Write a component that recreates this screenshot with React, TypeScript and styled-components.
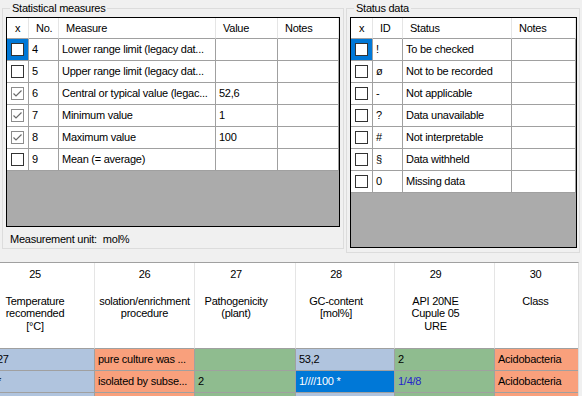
import styled, { createGlobalStyle } from 'styled-components';

const GlobalStyle = createGlobalStyle`
  html, body {
    margin: 0;
    padding: 0;
    background: #f0f0f0;
  }
  body {
    font-family: "Liberation Sans", Arial, sans-serif;
    font-size: 11px;
    letter-spacing: -0.25px;
    color: #000;
  }
`;

const Window = styled.div`
  width: 582px;
  height: 396px;
  overflow: hidden;
  background: #f0f0f0;
  display: flex;
  flex-direction: column;
`;

const TopArea = styled.div`
  height: 262px;
  flex: none;
  box-sizing: border-box;
  display: flex;
  align-items: flex-start;
  gap: 2px;
  padding: 1px 0 0 2px;
`;

const GroupBox = styled.fieldset<{ $w: number; $h: number }>`
  width: ${(p) => p.$w}px;
  height: ${(p) => p.$h}px;
  box-sizing: border-box;
  min-width: 0;
  margin: 0;
  padding: 2px 3px 0 3px;
  border: 1px solid #dcdcdc;
  display: flex;
  flex-direction: column;
`;

const Legend = styled.legend`
  margin-left: 4px;
  padding: 0 2px;
  line-height: 14px;
`;

const TableFrame = styled.div<{ $w: number; $h: number }>`
  width: ${(p) => p.$w}px;
  height: ${(p) => p.$h}px;
  flex: none;
  box-sizing: border-box;
  border: 1px solid #000;
  background: #ababab;
  overflow: hidden;
`;

const Row = styled.div`
  display: flex;
`;

const HeadCell = styled.div<{ $w: number; $center?: boolean }>`
  width: ${(p) => p.$w}px;
  height: 21px;
  box-sizing: border-box;
  background: #fff;
  border-right: 1px solid #e5e5e5;
  border-bottom: 1px solid #a0a0a0;
  padding-left: ${(p) => (p.$center ? 0 : 7)}px;
  display: flex;
  align-items: center;
  justify-content: ${(p) => (p.$center ? 'center' : 'flex-start')};
  white-space: nowrap;
`;

const Cell = styled.div<{ $w: number }>`
  width: ${(p) => p.$w}px;
  height: 22px;
  box-sizing: border-box;
  background: #fff;
  border-right: 1px solid #a0a0a0;
  border-bottom: 1px solid #a0a0a0;
  padding-left: 3px;
  line-height: 21px;
  white-space: nowrap;
  overflow: hidden;
`;

const CheckCell = styled(Cell)<{ $selected?: boolean }>`
  padding-left: 0;
  background: ${(p) => (p.$selected ? '#0078d7' : '#fff')};
  display: flex;
  align-items: center;
  justify-content: center;
`;

const Box = styled.span<{ $checked?: boolean }>`
  width: 13px;
  height: 13px;
  box-sizing: border-box;
  background: #fff;
  border: 1px solid ${(p) => (p.$checked ? '#8c8c8c' : '#333')};
  display: flex;
  align-items: center;
  justify-content: center;
`;

const Caption = styled.div`
  margin-top: 5px;
  padding-left: 4px;
  line-height: 14px;
  display: flex;
  gap: 6px;
`;

const DataGrid = styled.div`
  width: 579px;
  flex: 1;
  box-sizing: border-box;
  background: #fff;
  border-top: 1px solid #a0a0a0;
  border-right: 1px solid #dcdcdc;
  overflow: hidden;
`;

const GridInner = styled.div`
  margin-left: -6px;
  width: max-content;
`;

const ColHead = styled.div<{ $w: number; $tight?: boolean }>`
  width: ${(p) => p.$w}px;
  height: 86px;
  box-sizing: border-box;
  border-right: 1px solid #e5e5e5;
  border-bottom: 1px solid #a0a0a0;
  padding: 5px ${(p) => (p.$tight ? 0 : 18)}px 0 0;
  display: flex;
  flex-direction: column;
  align-items: center;
  overflow: hidden;
`;

const ColNo = styled.div`
  line-height: 13px;
`;

const ColLabel = styled.div`
  margin-top: 14px;
  line-height: 12.3px;
  white-space: pre;
  text-align: center;
`;

const DataCell = styled.div<{ $w: number; $bg: string; $fg?: string }>`
  width: ${(p) => p.$w}px;
  height: 22px;
  box-sizing: border-box;
  background: ${(p) => p.$bg};
  color: ${(p) => p.$fg ?? '#000'};
  border-right: 1px solid #a0a0a0;
  border-bottom: 1px solid #a0a0a0;
  padding-left: 3px;
  line-height: 21px;
  white-space: nowrap;
  overflow: hidden;
`;

function Check({ checked }: { checked?: boolean }) {
  return (
    <Box $checked={checked}>
      {checked && (
        <svg width="11" height="11" viewBox="0 0 11 11">
          <polyline points="1.5,5.5 4,8 9.5,2.5" fill="none" stroke="#6a6a6a" strokeWidth="1.2" />
        </svg>
      )}
    </Box>
  );
}

const measures = [
  { no: '4', name: 'Lower range limit (legacy dat...', value: '', checked: false },
  { no: '5', name: 'Upper range limit (legacy dat...', value: '', checked: false },
  { no: '6', name: 'Central or typical value (legac...', value: '52,6', checked: true },
  { no: '7', name: 'Minimum value', value: '1', checked: true },
  { no: '8', name: 'Maximum value', value: '100', checked: true },
  { no: '9', name: 'Mean (= average)', value: '', checked: false },
];

const statuses = [
  { id: '!', name: 'To be checked' },
  { id: 'ø', name: 'Not to be recorded' },
  { id: '-', name: 'Not applicable' },
  { id: '?', name: 'Data unavailable' },
  { id: '#', name: 'Not interpretable' },
  { id: '§', name: 'Data withheld' },
  { id: '0', name: 'Missing data' },
];

const BLUE = '#b0c4de';
const ORANGE = '#f9a07c';
const GREEN = '#8fbc8f';
const SELECTED = '#0078d7';

const columns = [
  { no: '25', label: 'Temperature\nrecomended\n[°C]', w: 101 },
  { no: '26', label: 'solation/enrichment\nprocedure', w: 100, tight: true },
  { no: '27', label: 'Pathogenicity\n(plant)', w: 101 },
  { no: '28', label: 'GC-content\n[mol%]', w: 99 },
  { no: '29', label: 'API 20NE\nCupule 05\nURE', w: 100 },
  { no: '30', label: 'Class', w: 100 },
];

type GridCell = { text: string; bg: string; fg?: string };

const rows: GridCell[][] = [
  [
    { text: '27', bg: BLUE },
    { text: 'pure culture was ...', bg: ORANGE },
    { text: '', bg: GREEN },
    { text: '53,2', bg: BLUE },
    { text: '2', bg: GREEN },
    { text: 'Acidobacteria', bg: ORANGE },
  ],
  [
    { text: '*', bg: BLUE },
    { text: 'isolated by subse...', bg: ORANGE },
    { text: '2', bg: GREEN },
    { text: '1////100 *', bg: SELECTED, fg: '#fff' },
    { text: '1/4/8', bg: GREEN, fg: '#2424cc' },
    { text: 'Acidobacteria', bg: ORANGE },
  ],
  [
    { text: '', bg: BLUE },
    { text: '', bg: ORANGE },
    { text: '', bg: GREEN },
    { text: '', bg: BLUE },
    { text: '', bg: GREEN },
    { text: '', bg: ORANGE },
  ],
];

export default function App() {
  return (
    <Window>
      <GlobalStyle />
      <TopArea>
        <GroupBox $w={342} $h={248}>
          <Legend>Statistical measures</Legend>
          <TableFrame $w={334} $h={210}>
            <Row>
              <HeadCell $w={22} $center>x</HeadCell>
              <HeadCell $w={30}>No.</HeadCell>
              <HeadCell $w={157}>Measure</HeadCell>
              <HeadCell $w={62}>Value</HeadCell>
              <HeadCell $w={61}>Notes</HeadCell>
            </Row>
            {measures.map((m, i) => (
              <Row key={m.no}>
                <CheckCell $w={22} $selected={i === 0}>
                  <Check checked={m.checked} />
                </CheckCell>
                <Cell $w={30}>{m.no}</Cell>
                <Cell $w={157}>{m.name}</Cell>
                <Cell $w={62}>{m.value}</Cell>
                <Cell $w={61} />
              </Row>
            ))}
          </TableFrame>
          <Caption>
            <span>Measurement unit:</span>
            <span>mol%</span>
          </Caption>
        </GroupBox>
        <GroupBox $w={234} $h={252}>
          <Legend>Status data</Legend>
          <TableFrame $w={227} $h={231}>
            <Row>
              <HeadCell $w={22} $center>x</HeadCell>
              <HeadCell $w={30}>ID</HeadCell>
              <HeadCell $w={109}>Status</HeadCell>
              <HeadCell $w={64}>Notes</HeadCell>
            </Row>
            {statuses.map((s, i) => (
              <Row key={s.name}>
                <CheckCell $w={22} $selected={i === 0}>
                  <Check />
                </CheckCell>
                <Cell $w={30}>{s.id}</Cell>
                <Cell $w={109}>{s.name}</Cell>
                <Cell $w={64} />
              </Row>
            ))}
          </TableFrame>
        </GroupBox>
      </TopArea>
      <DataGrid>
        <GridInner>
          <Row>
            {columns.map((c) => (
              <ColHead key={c.no} $w={c.w} $tight={c.tight}>
                <ColNo>{c.no}</ColNo>
                <ColLabel>{c.label}</ColLabel>
              </ColHead>
            ))}
          </Row>
          {rows.map((r, ri) => (
            <Row key={ri}>
              {r.map((cell, ci) => (
                <DataCell key={ci} $w={columns[ci].w} $bg={cell.bg} $fg={cell.fg}>
                  {cell.text}
                </DataCell>
              ))}
            </Row>
          ))}
        </GridInner>
      </DataGrid>
    </Window>
  );
}
